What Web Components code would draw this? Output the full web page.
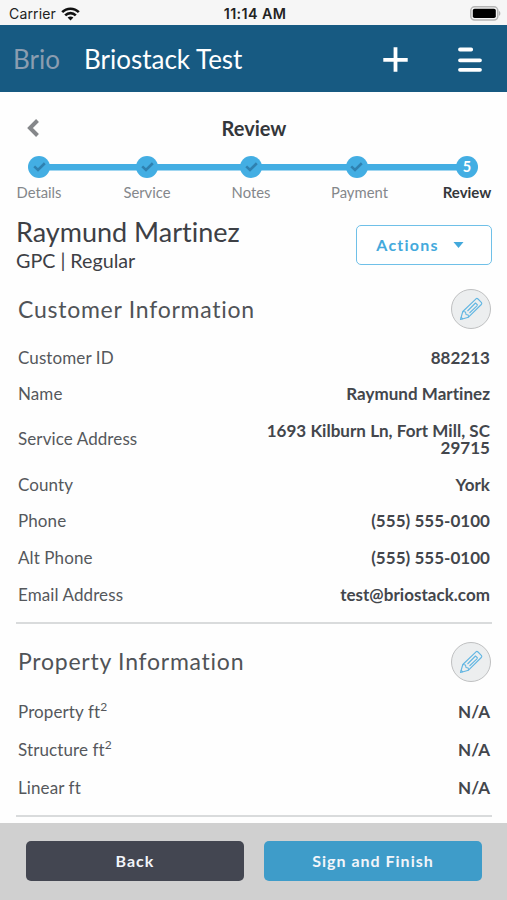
<!DOCTYPE html>
<html lang="en">
<head>
<meta charset="UTF-8">
<meta name="viewport" content="width=device-width, initial-scale=1.0">
<title>Briostack Test</title>
<style>
  body {
    margin: 0;
    background: #fefefe;
    color: #494c51;
    font-family: Lato, "Liberation Sans", sans-serif;
    font-variant-ligatures: none;
    overflow: hidden;
  }
</style>
</head>
<body>
<review-screen></review-screen>

<script>
class StatusBar extends HTMLElement {
  connectedCallback() {
    this.attachShadow({ mode: 'open' });
    this.shadowRoot.innerHTML = `
      <style>
        :host {
          display: grid;
          grid-template-columns: 1fr auto 1fr;
          align-items: center;
          box-sizing: border-box;
          height: 25px;
          padding: 3px 6px 0 9px;
          background: #f6f6f6;
          color: #222;
          font: 14px/20px Inter, "Liberation Sans", sans-serif;
        }
        .left { display: flex; align-items: center; gap: 5px; letter-spacing: .15px; }
        .time { font-weight: 600; font-size: 14.3px; letter-spacing: .4px; }
        .battery { justify-self: end; margin-top: -2px; }
        svg { display: block; }
      </style>
      <div class="left">
        <span>Carrier</span>
        <svg width="19" height="14" viewBox="0 0 19 14" fill="none" stroke="#111" stroke-width="2.6">
          <path d="M1.2 5.2C5.8.5 13.2.5 17.8 5.2"/>
          <path d="M4.2 8.4c3-3 7.6-3 10.6 0"/>
          <path d="M9.5 13.5 6.6 10.6c1.7-1.6 4.1-1.6 5.8 0z" fill="#111" stroke="none"/>
        </svg>
      </div>
      <span class="time">11:14 AM</span>
      <svg class="battery" width="31" height="15" viewBox="0 0 31 15">
        <rect x=".8" y=".8" width="27" height="13.2" rx="3.8" fill="#f6f6f6" stroke="#b5b5b5" stroke-width="1.5"/>
        <rect x="2.8" y="2.8" width="23" height="9.2" rx="1.8" fill="#000"/>
        <path d="M29 5c1.8.6 1.8 4.2 0 4.8z" fill="#b5b5b5"/>
      </svg>
    `;
  }
}

class AppHeader extends HTMLElement {
  connectedCallback() {
    this.attachShadow({ mode: 'open' });
    this.shadowRoot.innerHTML = `
      <style>
        :host {
          display: flex;
          align-items: center;
          box-sizing: border-box;
          height: 67px;
          padding: 0 25px 0 13px;
          background: #175a82;
          color: #fff;
          font-size: 26px;
          line-height: 32px;
        }
        .brand { color: #8b9db0; margin-right: 24px; }
        .title { flex: 1; }
        svg { display: block; }
        .add { margin-top: 1px; }
        .menu { margin-left: 50px; }
      </style>
      <span class="brand">Brio</span>
      <span class="title"><slot></slot></span>
      <svg class="add" width="25" height="25" viewBox="0 0 25 25" stroke="#fff" stroke-width="3.8">
        <path d="M12.5.3v24.4M.3 12.8h24.4"/>
      </svg>
      <svg class="menu" width="24" height="26" viewBox="0 0 24 26" stroke="#fff" stroke-width="3.8" stroke-linecap="round">
        <path d="M2 3.5h11.2M2 14.3h20M2 23.8h20"/>
      </svg>
    `;
  }
}

class StepItem extends HTMLElement {
  connectedCallback() {
    const current = this.hasAttribute('current');
    const mark = current
      ? this.getAttribute('current')
      : `<svg width="13" height="10" viewBox="0 0 13 10" fill="none" stroke="#2f81b0" stroke-width="2.6">
          <path d="M1.2 4.4 5 8 11.8 1.3"/>
        </svg>`;
    this.attachShadow({ mode: 'open' });
    this.shadowRoot.innerHTML = `
      <style>
        :host {
          display: flex;
          flex-direction: column;
          align-items: center;
          gap: 5px;
          color: #84878b;
          font-size: 14.8px;
          line-height: 18px;
          white-space: nowrap;
        }
        :host([current]) { color: #34373b; font-weight: 700; font-size: 15px; }
        .dot {
          display: flex;
          align-items: center;
          justify-content: center;
          width: 22px;
          height: 22px;
          border-radius: 50%;
          background: #43aee3;
          color: #fff;
          font-size: 14.5px;
        }
        .text { margin-left: var(--label-shift, 0); }
      </style>
      <div class="dot">${mark}</div>
      <span class="text"><slot></slot></span>
    `;
  }
}

class StepProgress extends HTMLElement {
  connectedCallback() {
    this.attachShadow({ mode: 'open' });
    this.shadowRoot.innerHTML = `
      <style>
        /* each track is centred on its step, the first and last labels touch the edges */
        :host {
          display: grid;
          grid-template-columns: 46px 170px 38px 173px 48px;
          box-sizing: border-box;
          height: 46px;
          background: linear-gradient(#43aee3, #43aee3) 20px 8px / 430px 6.5px no-repeat;
        }
        ::slotted(*) { justify-self: center; }
      </style>
      <slot></slot>
    `;
  }
}

class InfoRow extends HTMLElement {
  connectedCallback() {
    const squared = this.hasAttribute('squared') ? '<sup>2</sup>' : '';
    this.attachShadow({ mode: 'open' });
    this.shadowRoot.innerHTML = `
      <style>
        :host {
          display: flex;
          align-items: center;
          justify-content: space-between;
          padding: 9.5px 2px;
          font-size: 17px;
          line-height: 17.6px;
        }
        .label { color: #55585c; letter-spacing: .1px; }
        .value { max-width: 228px; color: #43464c; font-weight: 700; text-align: right; letter-spacing: .03px; }
        sup { font-size: 12px; line-height: 0; }
        :host([squared]) { padding: 10.4px 2px; }
      </style>
      <span class="label">${this.getAttribute('label')}${squared}</span>
      <span class="value"><slot></slot></span>
    `;
  }
}

class InfoSection extends HTMLElement {
  connectedCallback() {
    this.attachShadow({ mode: 'open' });
    this.shadowRoot.innerHTML = `
      <style>
        :host { display: block; border-bottom: 2px solid #d9dbdc; padding-bottom: 9px; }
        header {
          display: flex;
          align-items: center;
          justify-content: space-between;
          padding: 0 1px 0 2px;
          margin-bottom: var(--heading-gap, 10px);
        }
        h2 { margin: -1px 0 0; font-size: 23px; line-height: 30px; font-weight: 400; letter-spacing: .75px; color: #505357; }
        button {
          display: flex;
          align-items: center;
          justify-content: center;
          box-sizing: border-box;
          width: 40px;
          height: 40px;
          padding: 0;
          border: 1.5px solid #bfc0c1;
          border-radius: 50%;
          background: #eceeef;
        }
      </style>
      <header>
        <h2>${this.getAttribute('heading')}</h2>
        <button aria-label="Edit">
          <svg width="24" height="24" viewBox="0 0 24 24" fill="none" stroke="#62b6e2" stroke-width="1.1" stroke-linejoin="round">
            <path d="M1.5 22.5 3.8 14.5 17 1.8Q18 1 19 2L22.5 5.7Q23.2 6.6 22.3 7.5L9.5 20.2z"/>
            <path d="M3.8 14.5 6.5 15 7 17.5 9.2 18 9.5 20.2M8.5 14 16.5 6l2.2 2.2M10.5 16 18.5 8.3M1.9 20.2 3.8 22"/>
          </svg>
        </button>
      </header>
      <slot></slot>
    `;
  }
}

class ActionBar extends HTMLElement {
  connectedCallback() {
    this.attachShadow({ mode: 'open' });
    this.shadowRoot.innerHTML = `
      <style>
        :host {
          display: flex;
          gap: 20px;
          box-sizing: border-box;
          height: 77px;
          padding: 18px 25px 19px 26px;
          background: #d0d0d0;
        }
        button {
          flex: 1;
          border: 0;
          border-radius: 5px;
          background: #434651;
          color: #f2f5fa;
          font: 700 16px/20px Lato, sans-serif;
          letter-spacing: 1px;
        }
        .primary { background: #3e9cc9; }
      </style>
      <button>Back</button>
      <button class="primary">Sign and Finish</button>
    `;
  }
}

class ReviewScreen extends HTMLElement {
  connectedCallback() {
    this.attachShadow({ mode: 'open' });
    this.shadowRoot.innerHTML = `
      <style>
        :host { display: flex; flex-direction: column; height: 900px; }
        main { flex: 1; min-height: 0; overflow: hidden; padding: 0 15px 0 16px; }
        .bar {
          display: grid;
          grid-template-columns: 1fr auto 1fr;
          align-items: center;
          box-sizing: border-box;
          height: 64px;
          padding: 7px 0 0 10px;
          margin-right: 10px;
        }
        h1 { margin: 0; font-size: 20px; line-height: 24px; font-weight: 700; color: #34373b; }
        .customer {
          display: flex;
          justify-content: space-between;
          align-items: flex-start;
          margin: 13px 0 16px;
          height: 58px;
          color: #3d4045;
        }
        .name { font-size: 27px; line-height: 33px; }
        .type { font-size: 19.7px; line-height: 26px; }
        .actions {
          display: flex;
          align-items: center;
          justify-content: center;
          gap: 14px;
          box-sizing: border-box;
          width: 136px;
          height: 40px;
          margin-top: 10px;
          padding: 0 8px 0 0;
          border: 1.5px solid #6fc0e8;
          border-radius: 5px;
          background: #fff;
          color: #43a9dc;
          font: 700 16px/20px Lato, sans-serif;
          letter-spacing: 1.2px;
        }
        .shifted { --label-shift: 6px; margin-left: 6px; margin-right: 6px; }
        info-section + info-section { margin-top: 18px; --heading-gap: 10.5px; }
      </style>
      <status-bar></status-bar>
      <app-header>Briostack Test</app-header>
      <main>
        <div class="bar">
          <svg width="14" height="18" viewBox="0 0 14 18" fill="none" stroke="#85878a" stroke-width="4">
            <path d="M11.5 1.5 4 9l7.5 7.5"/>
          </svg>
          <h1>Review</h1>
        </div>
        <step-progress>
          <step-item>Details</step-item>
          <step-item>Service</step-item>
          <step-item>Notes</step-item>
          <step-item class="shifted">Payment</step-item>
          <step-item current="5">Review</step-item>
        </step-progress>
        <div class="customer">
          <div>
            <div class="name">Raymund Martinez</div>
            <div class="type">GPC | Regular</div>
          </div>
          <button class="actions">Actions
            <svg width="11" height="6" viewBox="0 0 11 6" fill="#43a9dc"><path d="M.5 0h10l-5 6z"/></svg>
          </button>
        </div>
        <info-section heading="Customer Information">
          <info-row label="Customer ID">882213</info-row>
          <info-row label="Name">Raymund Martinez</info-row>
          <info-row label="Service Address">1693 Kilburn Ln, Fort Mill, SC 29715</info-row>
          <info-row label="County">York</info-row>
          <info-row label="Phone">(555) 555-0100</info-row>
          <info-row label="Alt Phone">(555) 555-0100</info-row>
          <info-row label="Email Address">test@briostack.com</info-row>
        </info-section>
        <info-section heading="Property Information">
          <info-row label="Property ft" squared>N/A</info-row>
          <info-row label="Structure ft" squared>N/A</info-row>
          <info-row label="Linear ft">N/A</info-row>
        </info-section>
      </main>
      <action-bar></action-bar>
    `;
  }
}

customElements.define('status-bar', StatusBar);
customElements.define('app-header', AppHeader);
customElements.define('step-item', StepItem);
customElements.define('step-progress', StepProgress);
customElements.define('info-row', InfoRow);
customElements.define('info-section', InfoSection);
customElements.define('action-bar', ActionBar);
customElements.define('review-screen', ReviewScreen);
</script>
</body>
</html>
